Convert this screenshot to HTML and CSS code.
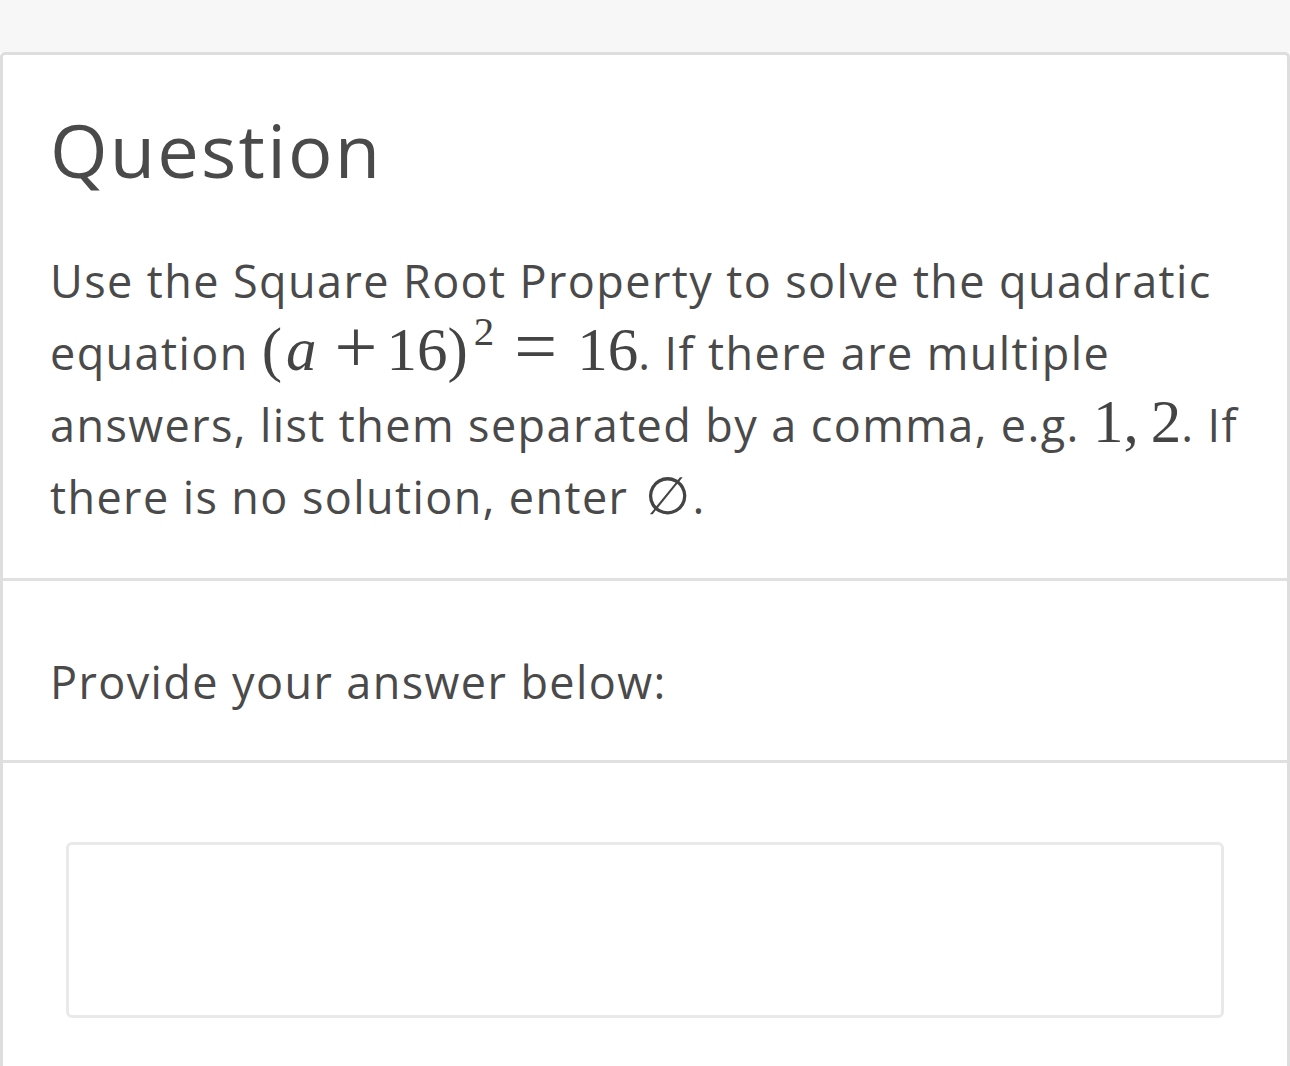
FILE: index.html
```html
<!DOCTYPE html>
<html>
<head>
<meta charset="utf-8">
<link rel="stylesheet" href="styles.css">
</head>
<body>
<div class="topbar"></div>
<div class="card">
  <section class="sec sec-question">
    <h1 class="title">Question</h1>
    <p class="body">Use the Square Root Property to solve the quadratic equation <span class="math">(<i>a</i><span class="op">+</span>16)<sup>2</sup><span class="rel">=</span>16</span>. If there are multiple answers, list them separated by a comma, e.g. <span class="math">1,<span class="sp"></span>2</span>. If there is no solution, enter <span class="math empty">∅</span>.</p>
  </section>
  <section class="sec sec-prompt">
    <p class="body">Provide your answer below:</p>
  </section>
  <section class="sec sec-answer">
    <div class="answer-box"></div>
  </section>
</div>
</body>
</html>
```
FILE: styles.css
```css
html, body {
  margin: 0;
  padding: 0;
  background: #ffffff;
}
body {
  font-family: "Open Sans", "Noto Sans", sans-serif;
  color: #4a4a4a;
  height: 1066px;
  overflow: hidden;
}
.topbar {
  height: 52px;
  background: #f7f7f7;
}
.card {
  border: 3px solid #dedede;
  border-bottom: none;
  border-radius: 5px 5px 0 0;
  background: #fff;
  min-height: 1011px;
}
.sec {
  padding-left: 47px;
  padding-right: 40px;
}
.sec-question {
  padding-top: 50px;
  padding-bottom: 45px;
  border-bottom: 3px solid #e0e0e0;
}
.title {
  margin: 0;
  font-size: 74px;
  font-weight: 400;
  line-height: 89px;
  letter-spacing: 2.2px;
}
.body {
  margin: 0;
  font-size: 45px;
  line-height: 72px;
  letter-spacing: 1.4px;
}
.sec-question .body {
  margin-top: 51px;
}
.sec-prompt {
  padding-top: 65px;
  padding-bottom: 42px;
  border-bottom: 3px solid #e0e0e0;
}
.sec-answer {
  padding-top: 79px;
  padding-left: 63px;
  padding-right: 63px;
}
.answer-box {
  height: 170px;
  border: 3px solid #e9e9e9;
  border-radius: 6px;
}
.math {
  font-family: "Liberation Serif", "DejaVu Serif", serif;
  font-size: 61px;
  line-height: 64px;
  letter-spacing: 0;
  color: #444;
}
.math i {
  font-style: italic;
  margin: 0 0 0 4px;
}
.math .op,
.math .rel {
  font-size: 76px;
  line-height: 0;
  font-weight: 300;
  display: inline-block;
  position: relative;
  top: 2px;
}
.math .op {
  margin: 0 9px 0 18px;
}
.math .rel {
  margin: 0 20px 0 20px;
}
.math sup {
  font-size: 41px;
  vertical-align: 0;
  position: relative;
  top: -25px;
  line-height: 0;
  margin-left: 6px;
}
.math .sp {
  display: inline-block;
  width: 12px;
}
.math.empty {
  font-family: "DejaVu Sans", sans-serif;
  font-size: 52px;
  line-height: 52px;
  font-weight: 200;
  margin: 0 2px 0 4px;
}
```
